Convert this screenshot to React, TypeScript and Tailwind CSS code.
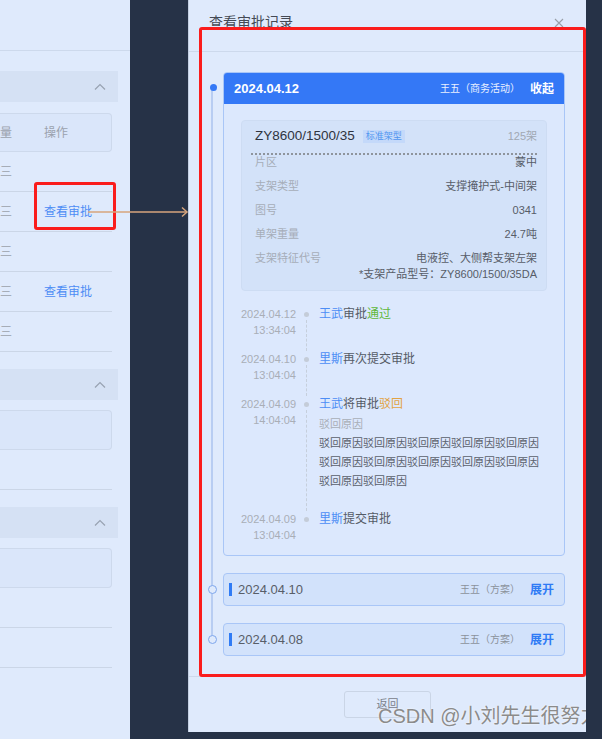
import React from 'react';

const font = "font-['Liberation_Sans','Noto_Sans_CJK_SC',sans-serif]";

type InfoRow = { label: string; value: string; extra?: string };

const infoRows: InfoRow[] = [
  { label: '片区', value: '蒙中' },
  { label: '支架类型', value: '支撑掩护式-中间架' },
  { label: '图号', value: '0341' },
  { label: '单架重量', value: '24.7吨' },
  { label: '支架特征代号', value: '电液控、大侧帮支架左架', extra: '*支架产品型号：ZY8600/1500/35DA' },
];

function Chevron() {
  return (
    <svg width="12" height="8" viewBox="0 0 12 8" className="mr-[12px]">
      <polyline points="1,6.5 6,1.5 11,6.5" fill="none" stroke="#98a2b1" strokeWidth="1.2" />
    </svg>
  );
}

function Bar({ className = '' }: { className?: string }) {
  return (
    <div className={`h-[31px] w-[118px] bg-[#d5e1f4] flex items-center justify-end ${className}`}>
      <Chevron />
    </div>
  );
}

function Row({ link }: { link?: boolean }) {
  return (
    <div className="h-[40px] w-[112px] border-b border-[#cbd6e7] flex items-center text-[12px]">
      <span className="w-[44px] text-[#a6adb8]">三</span>
      {link && <span className="text-[#4d8df5]">查看审批</span>}
    </div>
  );
}

function LeftPanel() {
  return (
    <div className="w-[130px] shrink-0 h-full bg-[#dfeafc]">
      <div className="h-[51px] border-b border-[#cdd9ec]" />
      <Bar className="mt-[20px]" />
      <div className="mt-[11px] h-[39px] w-[112px] rounded-r-[4px] border border-l-0 border-[#cdd9ec] bg-[#dae6fa] flex items-center text-[12px] text-[#9ba2ad]">
        <span className="w-[44px]">量</span>
        <span>操作</span>
      </div>
      <Row />
      <Row link />
      <Row />
      <Row link />
      <Row />
      <Bar className="mt-[17px]" />
      <div className="mt-[10px] h-[40px] w-[112px] rounded-r-[4px] border border-l-0 border-[#cdd9ec] bg-[#dae6fa]" />
      <div className="h-[40px] w-[112px] border-b border-[#cbd6e7]" />
      <Bar className="mt-[17px]" />
      <div className="mt-[10px] h-[40px] w-[112px] rounded-r-[4px] border border-l-0 border-[#cdd9ec] bg-[#dae6fa]" />
      <div className="h-[40px] w-[112px] border-b border-[#cbd6e7]" />
      <div className="h-[40px] w-[112px] border-b border-[#cbd6e7]" />
    </div>
  );
}

type Entry = { date: string; time: string; who: string; act: string; result?: string; color?: string; reason?: string[] };

const entries: Entry[] = [
  { date: '2024.04.12', time: '13:34:04', who: '王武', act: '审批', result: '通过', color: 'text-[#5fb83a]' },
  { date: '2024.04.10', time: '13:04:04', who: '里斯', act: '再次提交审批' },
  {
    date: '2024.04.09', time: '14:04:04', who: '王武', act: '将审批', result: '驳回', color: 'text-[#e2a343]',
    reason: ['驳回原因驳回原因驳回原因驳回原因驳回原因', '驳回原因驳回原因驳回原因驳回原因驳回原因', '驳回原因驳回原因'],
  },
  { date: '2024.04.09', time: '13:04:04', who: '里斯', act: '提交审批' },
];

function ApprovalLog() {
  return (
    <div className="mt-[15px]">
      {entries.map((e, i) => {
        const last = i === entries.length - 1;
        return (
          <div key={i} className={`flex ${last ? '' : 'pb-[13px]'}`}>
            <div className="w-[55px] shrink-0 text-right text-[11px] leading-[16px] text-[#a9aeb7] whitespace-nowrap">
              <div>{e.date}</div>
              <div>{e.time}</div>
            </div>
            <div className="w-[20px] shrink-0 flex flex-col items-center">
              <span className="mt-[5.5px] h-[5px] w-[5px] rounded-full bg-[#c4ccd8]" />
              {!last && <span className="flex-1 mt-[3px] border-l border-dashed border-[#c6cfdc] -mb-[13px]" />}
            </div>
            <div className={`pl-[3px] whitespace-nowrap ${e.reason ? 'pb-[7px]' : ''}`}>
              <div className="text-[12px] leading-[16px] text-[#555b66]">
                <span className="text-[#4d8df5]">{e.who}</span>
                {e.act}
                {e.result && <span className={e.color}>{e.result}</span>}
              </div>
              {e.reason && (
                <>
                  <div className="mt-[4px] text-[11px] leading-[16px] text-[#a9aeb7]">驳回原因</div>
                  <div className="mt-[2px] text-[11px] leading-[19px] text-[#5a606b]">
                    {e.reason.map((r, j) => (
                      <div key={j}>{r}</div>
                    ))}
                  </div>
                </>
              )}
            </div>
          </div>
        );
      })}
    </div>
  );
}

function OpenCard() {
  return (
    <div className="w-[342px] rounded-[4px] border border-[#a9c6f7] bg-[#dce8fd] overflow-hidden">
      <div className="h-[31px] bg-[#3478f6] flex items-center justify-between pl-[10px] pr-[10px] text-white">
        <span className="text-[13px] font-bold">2024.04.12</span>
        <div className="flex items-center">
          <span className="text-[10px] text-white/90">王五（商务活动）</span>
          <span className="ml-[10px] text-[12px] font-bold">收起</span>
        </div>
      </div>
      <div className="pt-[16px] px-[17px] pb-[12px]">
        <div className="rounded-[4px] bg-[#d3e2f9] border border-[#cddcf3] pt-[7px] pl-[13px] pr-[9px] pb-[9px]">
          <div className="flex items-center justify-between leading-[16px]">
            <div className="flex items-center">
              <span className="text-[13.5px] text-[#2f3440]">ZY8600/1500/35</span>
              <span className="ml-[8px] px-[3px] text-[9px] leading-[13px] bg-[#c4d9fa] text-[#4f95f0]">标准架型</span>
            </div>
            <span className="text-[11px] text-[#a1a8b3]">125架</span>
          </div>
          <div className="mt-[9px] -ml-[4px] border-t-2 border-dotted border-[#8e949c]" />
          <div className="flex flex-col gap-[10px] text-[11px] leading-[14px]">
            {infoRows.map((r) => (
              <div key={r.label} className="flex justify-between">
                <span className="text-[#a6adb8]">{r.label}</span>
                <div className="text-right text-[#575d68]">
                  <div>{r.value}</div>
                  {r.extra && <div className="mt-[2px]">{r.extra}</div>}
                </div>
              </div>
            ))}
          </div>
        </div>
        <ApprovalLog />
      </div>
    </div>
  );
}

function ClosedCard({ date }: { date: string }) {
  return (
    <div className="w-[342px] h-[33px] rounded-[4px] border border-[#a9c6f7] bg-[#d2e2fb] flex items-center justify-between pl-[5px] pr-[10px]">
      <div className="flex items-center">
        <span className="w-[3px] h-[13px] bg-[#2f7bf5]" />
        <span className="ml-[6px] text-[13px] text-[#585e68]">{date}</span>
      </div>
      <div className="flex items-center">
        <span className="text-[10px] text-[#8c929b]">王五（方案）</span>
        <span className="ml-[10px] text-[12px] font-bold text-[#2f7bf5]">展开</span>
      </div>
    </div>
  );
}

function Drawer() {
  return (
    <div className="relative w-[398px] shrink-0 h-[732px] bg-[#dfeafc] border-l border-[#c3cfe2] flex flex-col overflow-hidden">
      <div className="h-[52px] shrink-0 border-b border-[#cdd9ec] flex items-start justify-between pl-[20px] pr-[22px] pt-[13px]">
        <span className="text-[14px] leading-[18px] text-[#444a55]">查看审批记录</span>
        <svg width="10" height="10" viewBox="0 0 10 10" className="mt-[5px]">
          <path d="M1 1L9 9M9 1L1 9" stroke="#9aa0a9" strokeWidth="1.1" />
        </svg>
      </div>
      <div className="flex-1 pt-[20px]">
        <div className="relative flex flex-col gap-[17px]">
          <span className="absolute left-[22px] top-[16px] bottom-[16px] w-[2px] bg-[#b8cdf2]" />
          <div className="flex">
            <div className="relative w-[34px] shrink-0 pl-[21px] pt-[12px]">
              <span className="block h-[7px] w-[7px] rounded-full bg-[#3478f6]" />
            </div>
            <OpenCard />
          </div>
          {['2024.04.10', '2024.04.08'].map((d) => (
            <div key={d} className="flex">
              <div className="relative w-[34px] shrink-0 pl-[19px] pt-[12px]">
                <span className="block h-[9px] w-[9px] rounded-full border-[1.5px] border-[#7ea6ec] bg-[#dfeafc]" />
              </div>
              <ClosedCard date={d} />
            </div>
          ))}
        </div>
      </div>
      <div className="h-[56px] shrink-0 border-t border-[#cdd9ec] flex justify-center pt-[14px]">
        <div className="h-[27px] w-[87px] rounded-[3px] border border-[#cad5e6] flex items-center justify-center text-[11px] text-[#7a808a]">
          返回
        </div>
      </div>
      <div className="absolute left-[189px] top-[702px] whitespace-nowrap text-[20px] leading-[28px] text-[#8b8b8b] [text-shadow:0_0_2px_#ffffff]">
        CSDN @小刘先生很努力
      </div>
    </div>
  );
}

export default function App() {
  return (
    <div className={`relative w-[602px] h-[739px] overflow-hidden bg-[#263247] flex items-start ${font}`}>
      <LeftPanel />
      <div className="w-[58px] shrink-0" />
      <Drawer />

      {/* annotations */}
      <div className="absolute left-[34px] top-[182px] w-[82px] h-[48px] rounded-[3px] border-[3px] border-[#fa1c1c]" />
      <svg className="absolute left-[88px] top-[206px]" width="102" height="12" viewBox="0 0 102 12">
        <line x1="0" y1="6" x2="99" y2="6" stroke="#d7a57c" strokeWidth="1.5" />
        <polyline points="94,1.5 99,6 94,10.5" fill="none" stroke="#d7a57c" strokeWidth="1.5" />
      </svg>
      <div className="absolute left-[199px] top-[27px] w-[387px] h-[650px] rounded-[3px] border-[3px] border-[#fa1c1c]" />
    </div>
  );
}
